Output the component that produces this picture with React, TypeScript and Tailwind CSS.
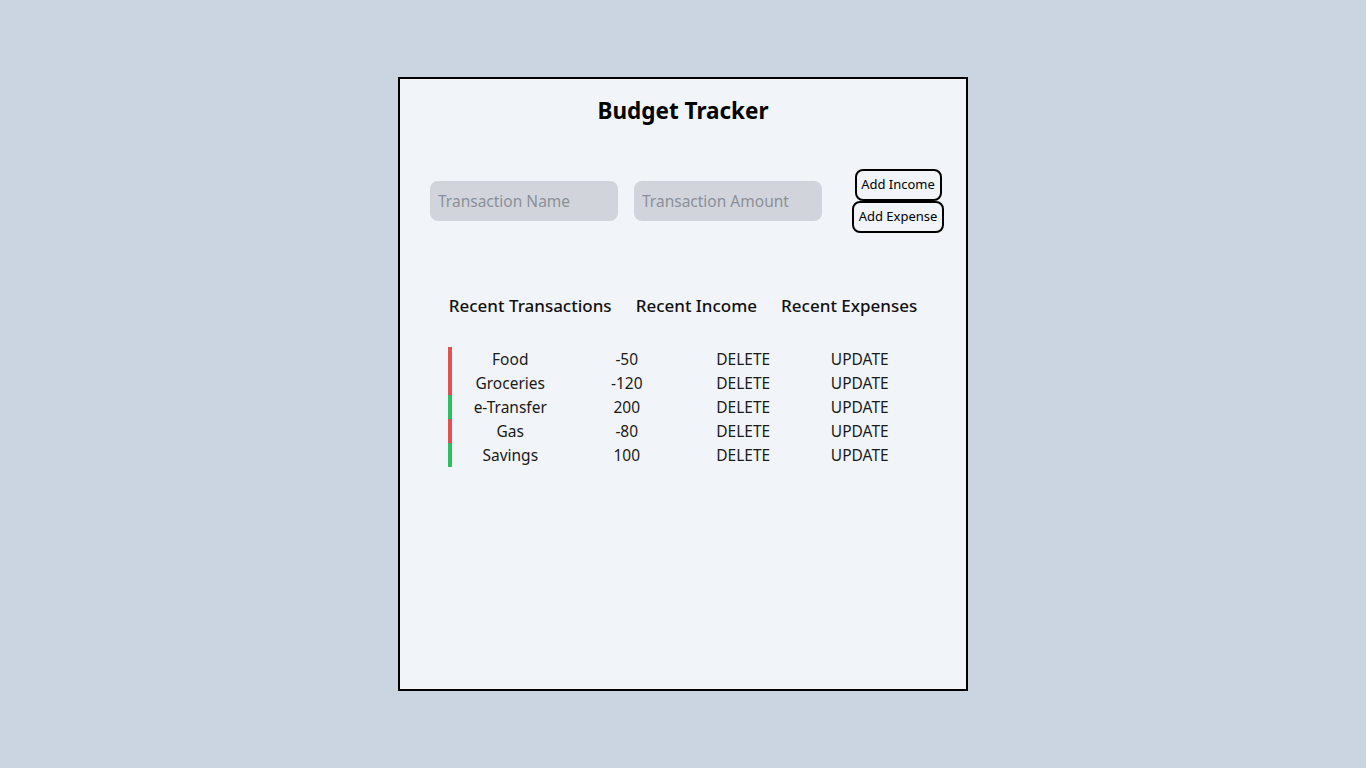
import React, { useState } from 'react';

type Txn = { name: string; amount: number };

const initialTransactions: Txn[] = [
  { name: 'Food', amount: -50 },
  { name: 'Groceries', amount: -120 },
  { name: 'e-Transfer', amount: 200 },
  { name: 'Gas', amount: -80 },
  { name: 'Savings', amount: 100 },
];

export default function App() {
  const [transactions, setTransactions] = useState(initialTransactions);
  const [name, setName] = useState('');
  const [amount, setAmount] = useState('');

  const addTxn = (sign: number) => {
    const n = Math.abs(Number(amount));
    if (!name || !n) return;
    setTransactions(prev => [...prev, { name, amount: sign * n }]);
    setName('');
    setAmount('');
  };

  const deleteTxn = (index: number) => {
    setTransactions(prev => prev.filter((_, i) => i !== index));
  };

  return (
    <div
      className="min-h-screen bg-[#cbd5e1] flex items-center justify-center"
      style={{ fontFamily: '"Segoe UI", "Noto Sans", sans-serif' }}
    >
      <div className="w-[570px] h-[614px] border-2 border-black bg-[#f1f5f9] flex flex-col">
        {/* Header */}
        <h1 className="mt-4 text-[22.5px] leading-8 font-bold text-black text-center">Budget Tracker</h1>

        {/* Inputs */}
        <div className="mt-[42px] flex items-center pl-[30px]">
          <input
            value={name}
            onChange={e => setName(e.target.value)}
            placeholder="Transaction Name"
            className="w-[188px] h-10 rounded-lg bg-[#d1d5db] px-2 text-[15.5px] text-gray-800 placeholder:text-[#8b9099] outline-none"
          />
          <input
            value={amount}
            onChange={e => setAmount(e.target.value)}
            placeholder="Transaction Amount"
            className="ml-4 w-[188px] h-10 rounded-lg bg-[#d1d5db] px-2 text-[15.5px] text-gray-800 placeholder:text-[#8b9099] outline-none"
          />
          <div className="ml-[30px] flex flex-col items-center">
            <button
              onClick={() => addTxn(1)}
              className="w-[87px] h-8 border-2 border-black rounded-lg text-[13px] text-black bg-[#f1f5f9]"
            >
              Add Income
            </button>
            <button
              onClick={() => addTxn(-1)}
              className="w-[92px] h-8 border-2 border-black rounded-lg text-[13px] text-black bg-[#f1f5f9]"
            >
              Add Expense
            </button>
          </div>
        </div>

        {/* Tabs */}
        <div className="mt-[59px] flex justify-center gap-6 text-[17px] leading-7 font-medium text-[#111]">
          <span>Recent Transactions</span>
          <span>Recent Income</span>
          <span>Recent Expenses</span>
        </div>

        {/* List */}
        <div className="mt-[27px] flex flex-col items-center">
          {transactions.map((t, i) => (
            <div
              key={i}
              className={`w-[470px] grid grid-cols-4 border-l-4 text-[15.5px] leading-6 text-[#1a1a1a] text-center ${
                t.amount < 0 ? 'border-[#e05353]' : 'border-[#2dbe60]'
              }`}
            >
              <span>{t.name}</span>
              <span>{t.amount}</span>
              <button onClick={() => deleteTxn(i)}>DELETE</button>
              <button>UPDATE</button>
            </div>
          ))}
        </div>
      </div>
    </div>
  );
}
